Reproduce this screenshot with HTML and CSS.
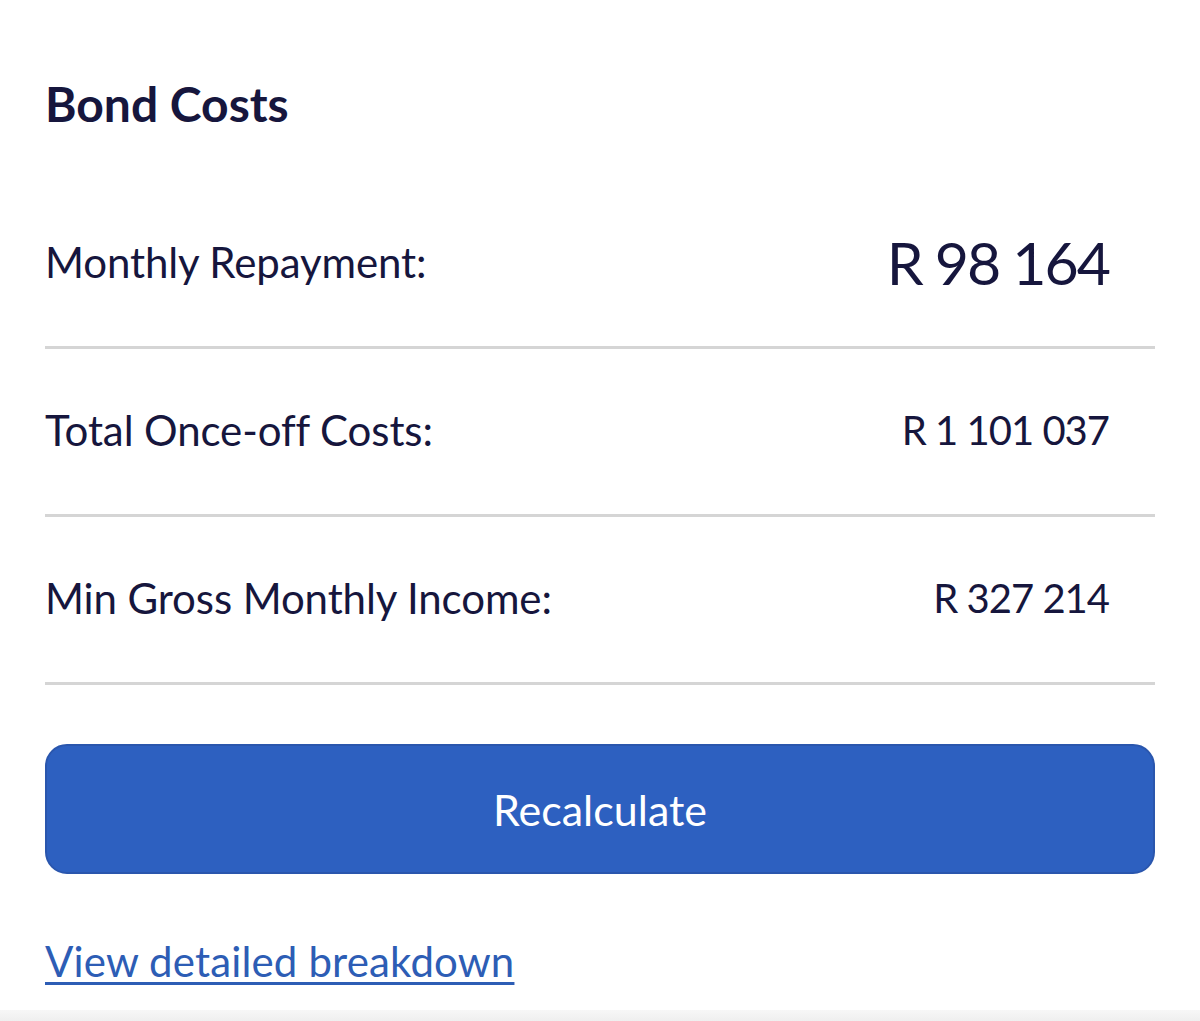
FILE: index.html
```html
<!DOCTYPE html>
<html lang="en">

<head>
     <meta charset="UTF-8">
     <meta name="viewport" content="width=device-width, initial-scale=1.0">
     <title>Bond Costs</title>
     <link rel="stylesheet" href="styles.css">
</head>

<body>
     <main class="bond-costs">
          <h2>Bond Costs</h2>

          <div class="cost-row">
               <span class="cost-label">Monthly Repayment:</span>
               <span class="cost-value cost-value-main">R 98 164</span>
          </div>
          <div class="cost-row">
               <span class="cost-label">Total Once-off Costs:</span>
               <span class="cost-value">R 1 101 037</span>
          </div>
          <div class="cost-row">
               <span class="cost-label">Min Gross Monthly Income:</span>
               <span class="cost-value">R 327 214</span>
          </div>

          <button class="recalc-btn" type="button">Recalculate</button>

          <a class="breakdown-link" href="#">View detailed breakdown</a>
     </main>

     <div class="bottom-bar"></div>
</body>

</html>
```

FILE: styles.css
```css
body {
     font-family: Lato, "Noto Sans", sans-serif;
     margin: 0;
     padding: 0;
     background-color: #fff;
     color: #16163d;
     height: 1021px;
     overflow: hidden;
     position: relative;
}

.bond-costs {
     padding: 0 45px;
}

h2 {
     font-size: 48px;
     font-weight: 700;
     margin: 0;
     padding-top: 74px;
     line-height: 60px;
     height: 107px;
}

.cost-row {
     display: flex;
     justify-content: space-between;
     align-items: center;
     box-sizing: border-box;
     height: 168px;
     padding: 0 46px 3px 0;
     border-bottom: 3px solid #d5d5d5;
}

.cost-label {
     font-size: 42px;
     letter-spacing: -0.1px;
}

.cost-value {
     font-size: 40px;
     letter-spacing: -1px;
}

.cost-value-main {
     font-size: 59px;
     letter-spacing: -2px;
}

.recalc-btn {
     display: block;
     width: 100%;
     height: 130px;
     margin-top: 59px;
     background-color: #2d60c0;
     border: 2px solid #2a56ad;
     border-radius: 22px;
     color: #fff;
     font-family: inherit;
     font-size: 43px;
     cursor: pointer;
}

.breakdown-link {
     display: inline-block;
     margin-top: 62px;
     color: #2d5db5;
     font-size: 42px;
     letter-spacing: 0.15px;
     text-decoration-thickness: 3px;
     text-underline-offset: 5px;
}

.bottom-bar {
     position: absolute;
     left: 0;
     right: 0;
     bottom: 0;
     height: 11px;
     background: linear-gradient(#f7f7f7, #efefef);
}
```
